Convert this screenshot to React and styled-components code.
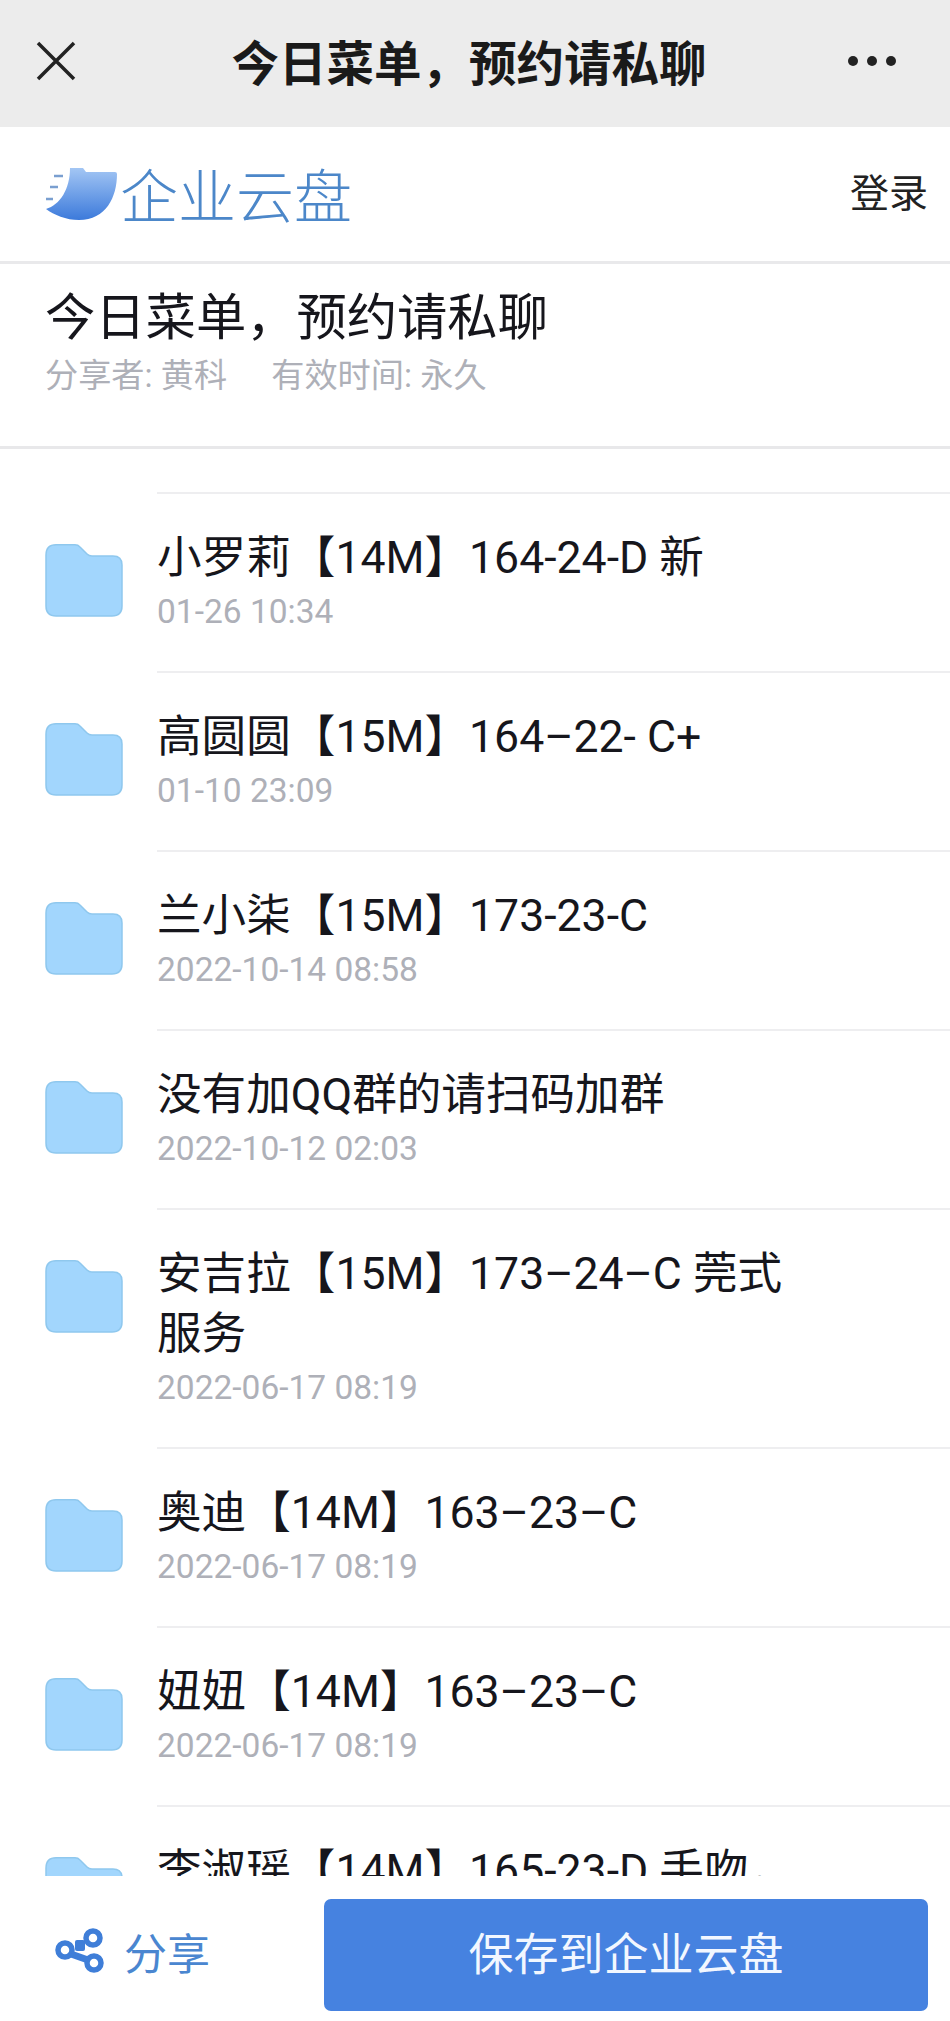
import React from "react";
import styled, { createGlobalStyle } from "styled-components";

const Global = createGlobalStyle`
  html, body { margin: 0; padding: 0; background: #fff; }
  body { font-family: Roboto, "Noto Sans CJK SC", sans-serif; }
  * { box-sizing: border-box; }
`;

const Page = styled.div`
  width: 950px;
  height: 2021px;
  display: flex;
  flex-direction: column;
  overflow: hidden;
  background: #fff;
`;

const TopBar = styled.header`
  flex: none;
  height: 127px;
  background: #ececec;
  display: grid;
  grid-template-columns: 1fr auto 1fr;
  align-items: center;
  padding: 0 53px 6px 36px;
`;

const TopTitle = styled.h1`
  margin: 0 0 0 5px;
  font-size: 47.5px;
  line-height: 60px;
  font-weight: 700;
  color: #1a1a1a;
  font-family: "Noto Sans CJK SC", sans-serif;
`;

const MoreDots = styled.svg`
  justify-self: end;
`;

const CloseIcon = styled.svg`
  justify-self: start;
`;

const BrandBar = styled.div`
  flex: none;
  height: 137px;
  border-bottom: 3px solid #e9e9eb;
  display: flex;
  align-items: center;
  justify-content: space-between;
  padding: 0 22px 0 46px;
`;

const Brand = styled.div`
  display: flex;
  align-items: center;
  gap: 2px;
`;

const BrandName = styled.span`
  font-family: "Noto Sans CJK SC", sans-serif;
  font-weight: 300;
  font-size: 58px;
  line-height: 64px;
  padding-bottom: 2px;
  color: #4c87c9;
`;

const Login = styled.span`
  font-family: "Noto Sans CJK SC", sans-serif;
  font-size: 39px;
  line-height: 50px;
  color: #222;
  margin-bottom: 8px;
`;

const DocInfo = styled.section`
  flex: none;
  height: 185px;
  padding: 16px 0 0 45px;
  border-bottom: 3px solid #e8e8ea;
`;

const DocTitle = styled.h2`
  margin: 0;
  font-family: "Noto Sans CJK SC", sans-serif;
  font-weight: 400;
  font-size: 50.3px;
  line-height: 66px;
  color: #16161c;
`;

const DocMeta = styled.div`
  display: flex;
  gap: 44px;
  font-size: 33.2px;
  line-height: 44px;
  margin-top: 8px;
  color: #aeb0b8;
`;

const List = styled.main`
  flex: 1;
  min-height: 0;
  overflow: hidden;
  padding-top: 43px;
`;

const Row = styled.article`
  display: flex;
  align-items: flex-start;
  padding-left: 45px;
  gap: 34px;
`;

const FolderIcon = styled.svg`
  flex: none;
  margin-top: 52px;
`;

const RowBody = styled.div`
  flex: 1;
  min-width: 0;
  border-top: 2px solid #eeeef0;
  padding: 34px 0 35px;
`;

const RowTitle = styled.div`
  width: 660px;
  font-size: 44.6px;
  line-height: 60px;
  color: #16161c;
`;

const RowDate = styled.div`
  font-size: 33.5px;
  line-height: 48px;
  color: #aeb0b8;
`;

const BottomBar = styled.footer`
  flex: none;
  height: 145px;
  background: #fff;
  display: flex;
  align-items: flex-start;
  justify-content: space-between;
  padding: 23px 22px 0 55px;
`;

const ShareAction = styled.div`
  display: flex;
  align-items: center;
  height: 104px;
  gap: 19px;
  font-size: 43px;
  color: #4a86d0;
  font-family: "Noto Sans CJK SC", sans-serif;
`;

const SaveButton = styled.button`
  width: 604px;
  height: 112px;
  border: none;
  border-radius: 7px;
  background: #4682e0;
  color: #f2f7ff;
  font-family: "Noto Sans CJK SC", sans-serif;
  font-size: 45px;
  padding: 0 0 8px;
`;

const rows = [
  ["小罗莉【14M】164-24-D 新", "01-26 10:34"],
  ["高圆圆【15M】164–22- C+", "01-10 23:09"],
  ["兰小柒【15M】173-23-C", "2022-10-14 08:58"],
  ["没有加QQ群的请扫码加群", "2022-10-12 02:03"],
  ["安吉拉【15M】173–24–C 莞式服务", "2022-06-17 08:19"],
  ["奥迪【14M】163–23–C", "2022-06-17 08:19"],
  ["妞妞【14M】163–23–C", "2022-06-17 08:19"],
  ["李淑瑶【14M】165-23-D 手吻，", "2022-06-17 08:19"],
];

const Folder = () => (
  <FolderIcon width="78" height="73" viewBox="0 0 78 73">
    <path
      d="M11 .8H30q3 0 5 2.2l7 7q2 2 5 2H68q9 0 9 9V62q0 10-10 10H11Q1 72 1 62V11Q1 .8 11 .8Z"
      fill="#a2d6fd"
      stroke="#8fc8ee"
      strokeWidth="1.5"
    />
  </FolderIcon>
);

const Logo = () => (
  <svg width="72" height="54" viewBox="0 0 72 54">
    <defs>
      <linearGradient id="logoFill" x1="0" y1="0" x2="0" y2="1">
        <stop offset="0" stopColor="#a3c6f4" />
        <stop offset="1" stopColor="#3c7adb" />
      </linearGradient>
    </defs>
    <path
      d="M24 1H37L40 5H69Q71 5 71 7C71 30 60 53 33 53C20 53 8 48 0 42C14 38 24 22 24 1Z"
      fill="url(#logoFill)"
    />
    <path d="M8 9H17M4 20H12M0 32H7" stroke="#7a9fd0" strokeWidth="2.5" fill="none" />
  </svg>
);

const ShareIcon = () => (
  <svg width="50" height="48" viewBox="0 0 50 48">
    <g fill="none" stroke="#3f7ed8" strokeWidth="5.5">
      <circle cx="10" cy="23" r="7" />
      <circle cx="38" cy="11" r="7" />
      <circle cx="39" cy="36" r="7" />
      <path d="M16 27L33 33" strokeWidth="7" />
    </g>
    <rect x="20" y="13" width="10" height="11" rx="2" fill="#3f7ed8" />
  </svg>
);

export default function App() {
  return (
    <Page>
      <Global />
      <TopBar>
        <CloseIcon width="40" height="40" viewBox="0 0 40 40">
          <path d="M2 2L38 38M38 2L2 38" stroke="#222" strokeWidth="3.5" fill="none" />
        </CloseIcon>
        <TopTitle>今日菜单，预约请私聊</TopTitle>
        <MoreDots width="50" height="12" viewBox="0 0 50 12">
          <circle cx="6" cy="6" r="5" fill="#222" />
          <circle cx="25" cy="6" r="5" fill="#222" />
          <circle cx="44" cy="6" r="5" fill="#222" />
        </MoreDots>
      </TopBar>
      <BrandBar>
        <Brand>
          <Logo />
          <BrandName>企业云盘</BrandName>
        </Brand>
        <Login>登录</Login>
      </BrandBar>
      <DocInfo>
        <DocTitle>今日菜单，预约请私聊</DocTitle>
        <DocMeta>
          <span>分享者: 黄科</span>
          <span>有效时间: 永久</span>
        </DocMeta>
      </DocInfo>
      <List>
        {rows.map(([title, date]) => (
          <Row key={title}>
            <Folder />
            <RowBody>
              <RowTitle>{title}</RowTitle>
              <RowDate>{date}</RowDate>
            </RowBody>
          </Row>
        ))}
      </List>
      <BottomBar>
        <ShareAction>
          <ShareIcon />
          分享
        </ShareAction>
        <SaveButton>保存到企业云盘</SaveButton>
      </BottomBar>
    </Page>
  );
}
